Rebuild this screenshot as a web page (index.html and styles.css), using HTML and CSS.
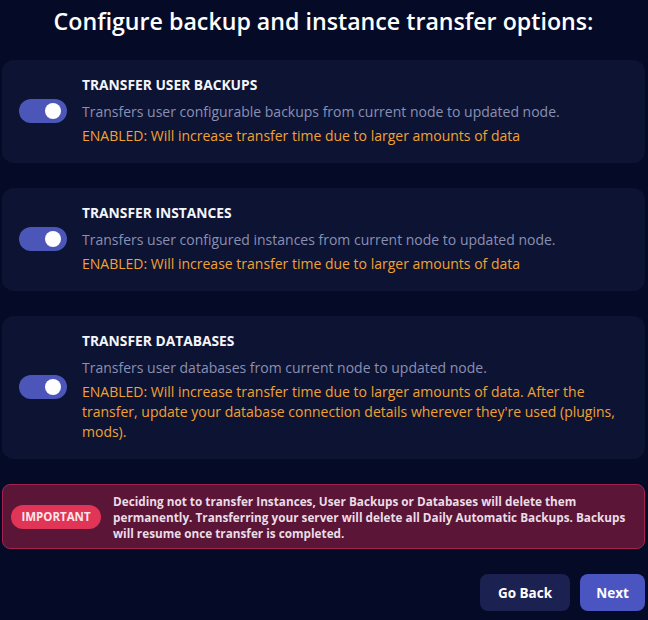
FILE: index.html
```html
<!DOCTYPE html>
<html>
<head>
<meta charset="utf-8">
<link rel="stylesheet" href="styles.css">
</head>
<body>
<div class="page">
  <h1 class="title">Configure backup and instance transfer options:</h1>

  <div class="card">
    <span class="toggle"><span class="thumb"></span></span>
    <div class="info">
      <div class="name">TRANSFER USER BACKUPS</div>
      <p class="desc">Transfers user configurable backups from current node to updated node.</p>
      <p class="warn">ENABLED: Will increase transfer time due to larger amounts of data</p>
    </div>
  </div>

  <div class="card">
    <span class="toggle"><span class="thumb"></span></span>
    <div class="info">
      <div class="name">TRANSFER INSTANCES</div>
      <p class="desc">Transfers user configured instances from current node to updated node.</p>
      <p class="warn">ENABLED: Will increase transfer time due to larger amounts of data</p>
    </div>
  </div>

  <div class="card">
    <span class="toggle"><span class="thumb"></span></span>
    <div class="info">
      <div class="name">TRANSFER DATABASES</div>
      <p class="desc">Transfers user databases from current node to updated node.</p>
      <p class="warn">ENABLED: Will increase transfer time due to larger amounts of data. After the transfer, update your database connection details wherever they're used (plugins, mods).</p>
    </div>
  </div>

  <div class="notice">
    <span class="badge">IMPORTANT</span>
    <p class="notice-text">Deciding not to transfer Instances, User Backups or Databases will delete them permanently. Transferring your server will delete all Daily Automatic Backups. Backups will resume once transfer is completed.</p>
  </div>

  <div class="actions">
    <button class="btn btn-back">Go Back</button>
    <button class="btn btn-next">Next</button>
  </div>
</div>
</body>
</html>
```

FILE: styles.css
```css
html, body {
  margin: 0;
  padding: 0;
  background: #050a26;
}
body {
  font-family: "Open Sans", "Liberation Sans", sans-serif;
  color: #fff;
}
.page {
  padding: 6px 3px 0 2px;
  display: flex;
  flex-direction: column;
  gap: 25px;
}
.title {
  margin: 0 0 -1px;
  font-size: 23.2px;
  line-height: 30px;
  font-weight: 600;
  text-align: center;
  color: #fff;
}
.card {
  background: #0d1332;
  border-radius: 12px;
  padding: 15px 20px 17px 17px;
  display: flex;
  align-items: center;
  gap: 15px;
}
.toggle {
  flex: none;
  width: 48px;
  height: 24px;
  border-radius: 12px;
  background: #4c56b8;
  display: flex;
  align-items: center;
  justify-content: flex-end;
  padding-right: 6px;
  box-sizing: border-box;
}
.thumb {
  width: 16px;
  height: 16px;
  border-radius: 50%;
  background: #fff;
}
.info {
  flex: 1;
}
.name {
  font-size: 13.8px;
  font-weight: 700;
  line-height: 20px;
  color: #f4f5fb;
}
.desc {
  margin: 7px 0 0;
  font-size: 14px;
  line-height: 20px;
  color: #8a90b2;
}
.warn {
  margin: 4px 0 0;
  font-size: 14px;
  line-height: 20px;
  color: #f0a233;
}
.notice {
  background: #5a1537;
  border: 1px solid #a2234b;
  border-radius: 8px;
  padding: 8px 10px 7px 8px;
  display: flex;
  align-items: center;
  gap: 12px;
}
.badge {
  flex: none;
  width: 90px;
  height: 24px;
  border-radius: 12px;
  background: #e03556;
  color: #fbe6ea;
  font-size: 11.5px;
  font-weight: 700;
  line-height: 24px;
  text-align: center;
}
.notice-text {
  margin: 0;
  font-size: 11.75px;
  font-weight: 700;
  line-height: 16px;
  color: #eadde6;
}
.actions {
  display: flex;
  justify-content: flex-end;
  gap: 10px;
}
.btn {
  height: 37px;
  border: none;
  border-radius: 8px;
  font-family: "Open Sans", "Liberation Sans", sans-serif;
  font-size: 13.5px;
  font-weight: 700;
  color: #fff;
}
.btn-back {
  width: 90px;
  background: #1b2150;
}
.btn-next {
  width: 65px;
  background: #4a55c2;
}
```
